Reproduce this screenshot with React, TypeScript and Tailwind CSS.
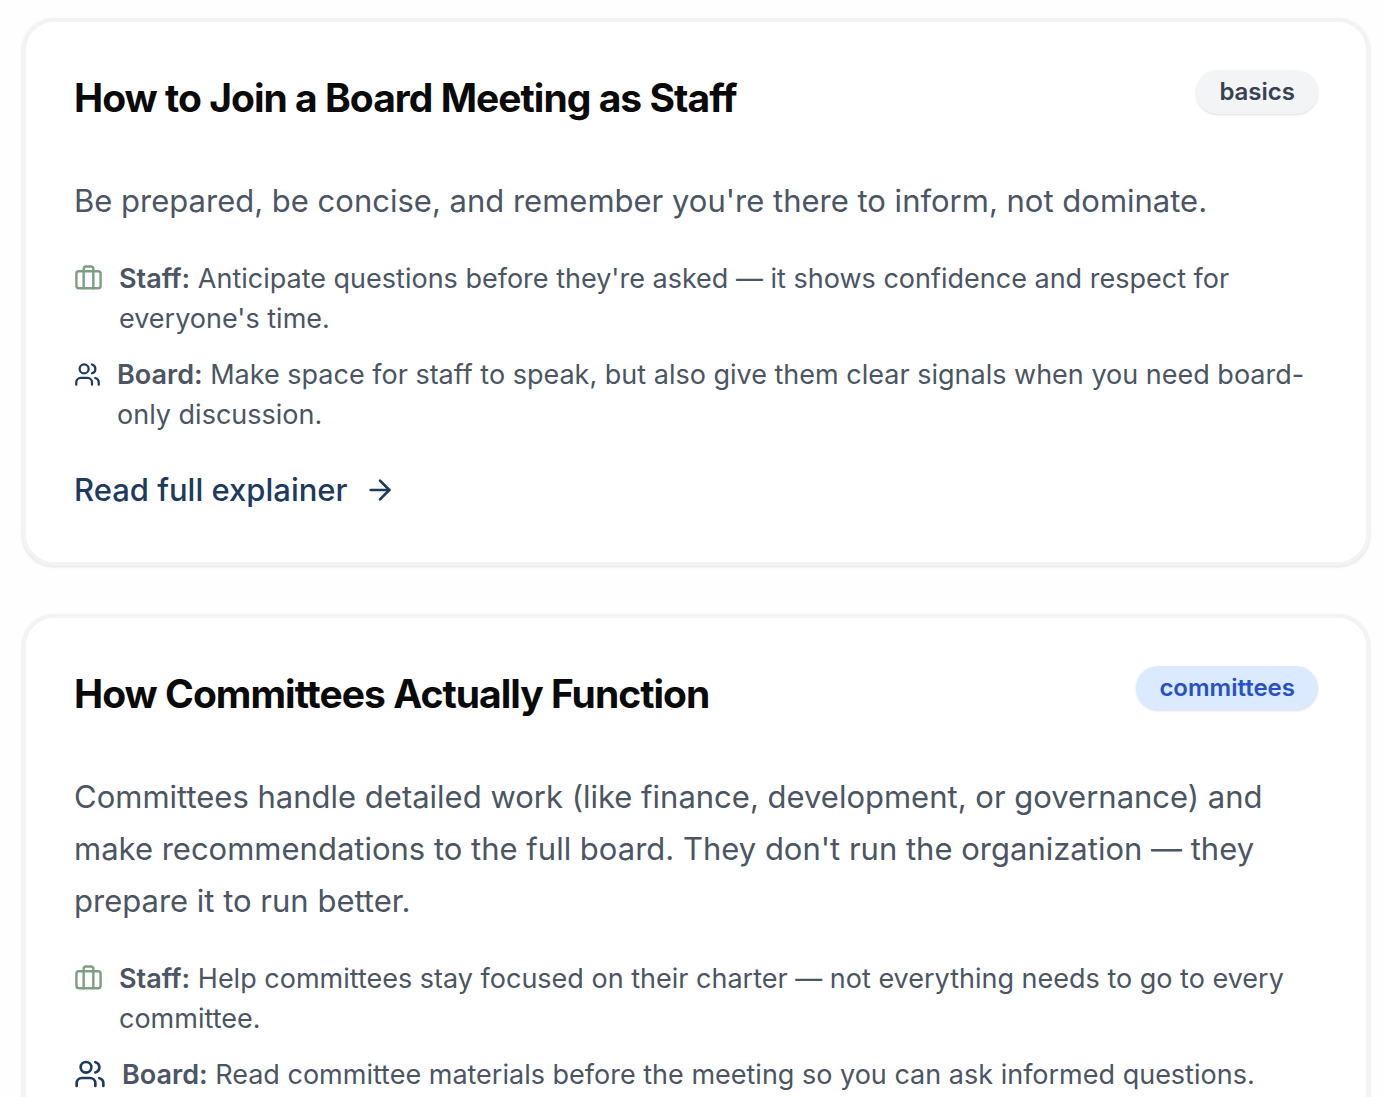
import React from 'react';
import { ArrowRight, Users } from 'lucide-react';

type Explainer = {
  title: string;
  tag: string;
  tagClass: string;
  summary: string;
  staff: string;
  board: string;
  boardIconClass: string;
};

const explainers: Explainer[] = [
  {
    title: 'How to Join a Board Meeting as Staff',
    tag: 'basics',
    tagClass: 'bg-[#f3f4f6] text-[#374151]',
    summary: "Be prepared, be concise, and remember you're there to inform, not dominate.",
    staff: "Anticipate questions before they're asked — it shows confidence and respect for everyone's time.",
    board: 'Make space for staff to speak, but also give them clear signals when you need board-only discussion.',
    boardIconClass: 'mt-1.5 size-[27px]',
  },
  {
    title: 'How Committees Actually Function',
    tag: 'committees',
    tagClass: 'bg-[#dbeafe] text-[#2650cc]',
    summary:
      "Committees handle detailed work (like finance, development, or governance) and make recommendations to the full board. They don't run the organization — they prepare it to run better.",
    staff: 'Help committees stay focused on their charter — not everything needs to go to every committee.',
    board: 'Read committee materials before the meeting so you can ask informed questions.',
    boardIconClass: 'mt-[3px] size-8',
  },
];

// Suitcase with two straps
const StaffIcon = () => (
  <svg
    viewBox="0 0 24 24"
    fill="none"
    stroke="currentColor"
    strokeWidth="2"
    strokeLinecap="round"
    strokeLinejoin="round"
    className="mt-[5px] size-[29px] shrink-0 text-[#7d9f80]"
    aria-hidden="true"
  >
    <path d="M16 20V4a2 2 0 0 0-2-2h-4a2 2 0 0 0-2 2v16" />
    <rect width="20" height="14" x="2" y="6" rx="2" />
  </svg>
);

const ExplainerCard: React.FC<{ item: Explainer }> = ({ item }) => (
  <article className="rounded-[32px] border-4 border-[#f3f3f4] bg-white px-12 pt-12 pb-12 shadow-sm">
    <div className="flex items-start justify-between">
      <h2 className="pt-1 text-[39px] leading-12 font-bold tracking-tight text-[#0a0a0a]">{item.title}</h2>
      <span className={`rounded-full px-[23px] py-1 text-2xl leading-9 font-semibold shadow-sm ${item.tagClass}`}>
        {item.tag}
      </span>
    </div>
    <p className="mt-[53px] text-[31px] leading-[52px] text-[#4b5563]">{item.summary}</p>
    <div className="mt-8 flex flex-col gap-4 text-[27px] leading-10 text-[#4b5563]">
      <div className="flex items-start gap-4">
        <StaffIcon />
        <p>
          <strong className="font-semibold">Staff:</strong> {item.staff}
        </p>
      </div>
      <div className="flex items-start gap-4">
        <Users className={`shrink-0 text-[#1e3a5f] ${item.boardIconClass}`} />
        <p>
          <strong className="font-semibold">Board:</strong> {item.board}
        </p>
      </div>
    </div>
    <a href="#" className="mt-[31px] inline-flex items-center gap-4 text-[31px] leading-12 font-medium text-[#1e3a5f]">
      Read full explainer
      <ArrowRight className="size-8" />
    </a>
  </article>
);

const App: React.FC = () => {
  return (
    <main className="flex flex-col gap-12 bg-[#fefefe] pt-[18px] pr-4 pl-[22px] font-['Inter',sans-serif]">
      {explainers.map((item) => (
        <ExplainerCard key={item.title} item={item} />
      ))}
    </main>
  );
};

export default App;
